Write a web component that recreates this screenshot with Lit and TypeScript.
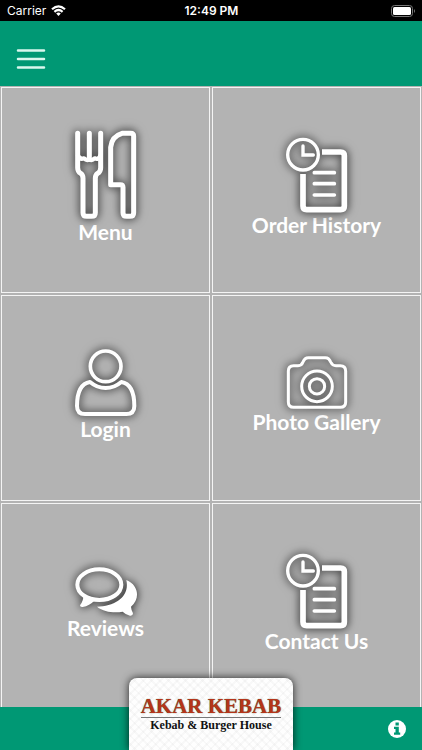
import { LitElement, html, svg, css } from "lit";
import { customElement } from "lit/decorators.js";

const documentIcon = {
  w: 62, h: 76, box: "138 38 186 228",
  art: svg`<circle cx="189" cy="91" r="46" stroke-width="10"/>
    <path d="M189 65V92H220" stroke-width="10" stroke-linecap="round"/>
    <path d="M246 83H302Q313 83 313 94V245Q313 256 302 256H200Q189 256 189 245V149" stroke-width="17"/>
    <path d="M223 145H283M223 178H283M223 212H283" stroke-width="11" stroke-linecap="round"/>`,
};

const tiles = [
  {
    label: "Menu",
    icon: {
      w: 62, h: 90, box: "45 33 186 270",
      art: svg`<g stroke-width="15" stroke-linecap="round" stroke-linejoin="round">
        <path d="M53 43V146Q53 158 62 163Q69 168 69 178V281Q69 292 80 292H95Q106 292 106 281V178Q106 168 113 163Q122 158 122 146V43M88 43V115"/>
        <path d="M54 110Q60 123 72 118Q80 126 88 121Q96 126 104 118Q116 123 121 110" stroke-width="13"/>
        <path d="M186 43H212Q221 43 221 52V281Q221 292 210 292H200Q189 292 189 281V205Q189 197 181 197H152V85Q155 52 186 43Z"/>
      </g>`,
    },
  },
  { label: "Order History", icon: documentIcon },
  {
    label: "Login",
    icon: {
      w: 62, h: 68, box: "45 42 186 204",
      art: svg`<circle cx="137" cy="94" r="46" stroke-width="11"/>
        <path d="M90 141C60 146 51 175 51 213Q51 237 75 237H199Q223 237 223 213C223 175 214 146 184 141Q163 159 137 159Q111 159 90 141Z" stroke-width="12" stroke-linejoin="round"/>`,
    },
  },
  {
    label: "Photo Gallery",
    icon: {
      w: 62, h: 54, box: "136 35 186 162",
      art: svg`<g stroke-width="9">
        <path d="M143 80Q143 64 159 64H172Q183 64 187 53Q192 40 203 40H254Q265 40 270 53Q275 64 286 64H299Q315 64 315 80V173Q315 189 299 189H159Q143 189 143 173Z"/>
        <circle cx="229" cy="126" r="46"/><circle cx="229" cy="126" r="23"/>
      </g>`,
    },
  },
  {
    label: "Reviews",
    icon: {
      w: 62, h: 49, box: "59 35 186 147",
      art: svg`<ellipse cx="132" cy="88" rx="66" ry="46" stroke-width="12"/>
        <path d="M83 119Q86 134 74 150Q74 156 82 155Q103 151 117 136Z" fill="#fff" stroke="none"/>
        <path d="M213 74C252 90 254 132 227 154Q228 166 233 174Q233 182 224 181Q211 178 202 169C178 173 146 171 125 154C180 153 224 123 213 74Z" fill="#fff" stroke="none"/>`,
    },
  },
  { label: "Contact Us", icon: documentIcon },
];

@customElement("app-root")
export class AppRoot extends LitElement {
  static styles = css`
    :host {
      display: flex;
      flex-direction: column;
      height: 100vh;
      overflow: hidden;
      background: #b3b3b3;
      color: #fff;
      font-family: Lato, sans-serif;
    }
    .status {
      flex: none;
      display: grid;
      grid-template-columns: 1fr auto 1fr;
      align-items: center;
      height: 21px;
      padding: 0 6px 0 7px;
      background: #000;
      font: 400 12px/21px Inter, sans-serif;
    }
    .carrier { display: flex; align-items: center; gap: 5px; }
    .time { font-weight: 600; }
    .battery { justify-self: end; }
    .bar {
      flex: none;
      display: flex;
      align-items: flex-end;
      box-sizing: border-box;
      height: 65px;
      padding: 0 12px 12px;
      background: #009874;
    }
    button, a { color: inherit; }
    .icon-button {
      display: block;
      padding: 4px;
      border: 0;
      background: none;
      cursor: pointer;
    }
    svg { display: block; }
    main { flex: 1; min-height: 0; overflow: hidden; }
    .grid {
      display: grid;
      grid-template-columns: 1fr 1fr;
      grid-auto-rows: minmax(206px, auto);
      gap: 2px;
      padding: 1px;
    }
    .tile {
      display: flex;
      flex-direction: column;
      align-items: center;
      justify-content: center;
      padding-bottom: 6px;
      border: 1px solid #f4f4f4;
      text-decoration: none;
      font-size: 21px;
      font-weight: 700;
      line-height: 24px;
    }
    .tile svg {
      overflow: visible;
      fill: none;
      stroke: #fff;
      filter: drop-shadow(0 0 4px rgba(0, 0, 0, 0.65)) drop-shadow(0 0 4px rgba(0, 0, 0, 0.25));
    }
    footer {
      position: relative;
      flex: none;
      display: flex;
      align-items: center;
      justify-content: flex-end;
      height: 43px;
      padding: 0 12px;
      background: #009874;
    }
    .brand {
      position: absolute;
      bottom: 0;
      left: 50%;
      transform: translateX(-50%);
      box-sizing: border-box;
      width: 164px;
      height: 72px;
      padding-top: 17px;
      border-radius: 8px 8px 0 0;
      background:
        repeating-linear-gradient(45deg, transparent 0 4px, rgba(0, 0, 0, 0.025) 4px 6px),
        repeating-linear-gradient(-45deg, transparent 0 4px, rgba(0, 0, 0, 0.025) 4px 6px),
        #fefefe;
      box-shadow: 0 0 8px rgba(0, 0, 0, 0.8);
      display: flex;
      flex-direction: column;
      align-items: center;
      font-family: "Liberation Serif", serif;
      font-weight: 700;
      white-space: nowrap;
    }
    .name {
      margin: 0;
      border-bottom: 1px solid #777;
      color: #b5341a;
      font-size: 21px;
      line-height: 22px;
      text-shadow: 0 0 1px #35602f;
    }
    .tagline {
      margin: 0;
      color: #111;
      font-size: 12px;
      line-height: 14px;
    }
  `;

  render() {
    return html`
      <div class="status">
        <span class="carrier">Carrier
          <svg width="15" height="11" viewBox="0 0 15 11" fill="none" stroke="#fff" stroke-width="2.2" aria-hidden="true">
            <path d="M1 4.2Q7.5-1.6 14 4.2"/><path d="M3.4 6.8Q7.5 3.2 11.600 6.8"/>
            <path d="M5.2 8.5Q7.5 6.5 9.8 8.5L7.5 11Z" fill="#fff" stroke="none"/>
          </svg>
        </span>
        <span class="time">12:49 PM</span>
        <svg class="battery" width="25" height="12" viewBox="0 0 25 12" aria-hidden="true">
          <rect x=".5" y=".5" width="21" height="11" rx="3" fill="none" stroke="#777"/>
          <rect x="2" y="2" width="18" height="8" rx="1.5" fill="#fff"/>
          <path d="M23 4Q25 6 23 8Z" fill="#777"/>
        </svg>
      </div>
      <header class="bar">
        <button class="icon-button" aria-label="Open menu">
          <svg width="30" height="22" viewBox="0 0 30 22" stroke="#d9f7ee" stroke-width="2.5" stroke-linecap="round">
            <path d="M2 2.500H28M2 11H28M2 19.5H28"/>
          </svg>
        </button>
      </header>
      <main>
        <nav class="grid">
          ${tiles.map(({ label, icon }) => html`
            <a class="tile" href="#">
              <svg width=${icon.w} height=${icon.h} viewBox=${icon.box} aria-hidden="true">${icon.art}</svg>
              <span>${label}</span>
            </a>`)}
        </nav>
      </main>
      <footer>
        <div class="brand">
          <p class="name">AKAR KEBAB</p>
          <p class="tagline">Kebab &amp; Burger House</p>
        </div>
        <button class="icon-button" aria-label="Information">
          <svg width="18" height="18" viewBox="0 0 18 18">
            <circle cx="9" cy="9" r="9" fill="#fff"/>
            <path d="M7.500 2.500H10.800V5.400H7.500ZM6 6.700H10.800V12.500H12.200V14.800H6V12.500H7.500V9H6Z" fill="#009874"/>
          </svg>
        </button>
      </footer>
    `;
  }
}
